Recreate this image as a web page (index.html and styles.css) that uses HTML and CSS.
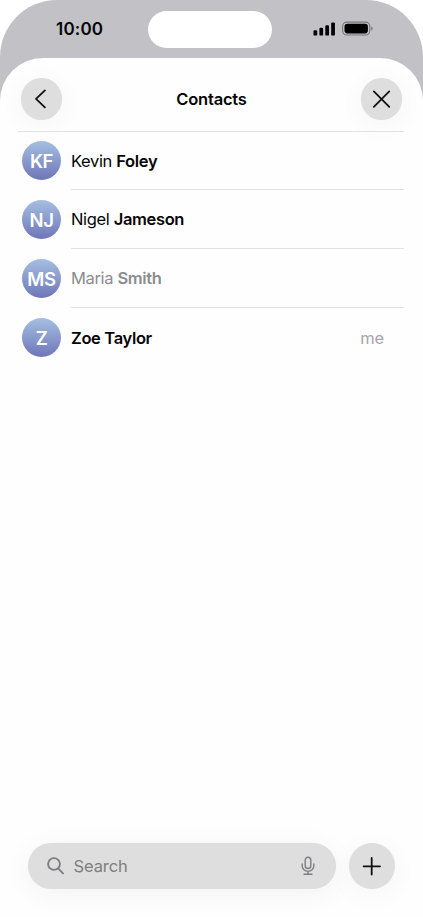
FILE: index.html
```html
<!DOCTYPE html>
<html lang="en">
<head>
<meta charset="utf-8">
<title>Contacts</title>
<link rel="stylesheet" href="styles.css">
</head>
<body>
<div class="phone">
  <div class="status">
    <span class="time">10:00</span>
    <div class="island"></div>
    <svg class="signals" width="61" height="16" viewBox="0 0 61 16">
      <rect x="0.5" y="9.3" width="3.7" height="5.3" rx="1.2"/>
      <rect x="6.4" y="6.8" width="3.7" height="7.8" rx="1.2"/>
      <rect x="12.3" y="4.2" width="3.7" height="10.4" rx="1.2"/>
      <rect x="18.2" y="1.4" width="3.7" height="13.2" rx="1.2"/>
      <rect class="shell" x="29.6" y="1.1" width="27.2" height="12.9" rx="4.2"/>
      <rect x="31.5" y="2.7" width="23.4" height="9.7" rx="2.8"/>
      <path class="tip" d="M58.2 5.4v4.4q1.5-.6 1.5-2.2t-1.5-2.2z"/>
    </svg>
  </div>
  <main class="sheet">
    <header class="header">
      <button class="round" aria-label="Back"><svg width="41.5" height="41.5" viewBox="0 0 42 42"><path d="M24.2 12.6 15.2 21.2l9 8.6"/></svg></button>
      <h1 class="title">Contacts</h1>
      <button class="round" aria-label="Close"><svg width="41.5" height="41.5" viewBox="0 0 42 42"><path d="m13 13.6 15.6 15.6M28.6 13.6 13 29.2"/></svg></button>
    </header>
    <ul class="list">
      <li class="row"><span class="avatar">KF</span><div class="cell"><span class="name kevin">Kevin <b>Foley</b></span></div></li>
      <li class="row"><span class="avatar">NJ</span><div class="cell"><span class="name nigel">Nigel <b>Jameson</b></span></div></li>
      <li class="row"><span class="avatar">MS</span><div class="cell"><span class="name maria">Maria <b>Smith</b></span></div></li>
      <li class="row"><span class="avatar">Z</span><div class="cell"><span class="name zoe"><b>Zoe Taylor</b></span><span class="me">me</span></div></li>
    </ul>
    <footer class="toolbar">
      <div class="search">
        <svg class="lens" width="18" height="18" viewBox="0 0 18 18"><circle cx="7" cy="7" r="5.9"/><path d="m11.4 11.6 4.6 4.7"/></svg>
        <span class="hint">Search</span>
        <svg class="mic" width="14" height="20" viewBox="0 0 14 20"><rect x="4.2" y="1.2" width="5.6" height="11.3" rx="2.8"/><path d="M1.2 8v1.9a5.8 5.5 0 0 0 11.6 0V8M7 15.4v2.8M3 18.3h8"/></svg>
      </div>
      <button class="round add" aria-label="Add"><svg width="46" height="46" viewBox="0 0 46 46"><path d="M22.7 15v16.6M14.6 23.3h16.4"/></svg></button>
    </footer>
  </main>
</div>
</body>
</html>
```
FILE: styles.css
```css
* { box-sizing: border-box; }
body {
  margin: 0;
  background: #fff;
  font-family: Inter, sans-serif;
  color: #050505;
}
.phone {
  display: flex;
  flex-direction: column;
  width: 423px;
  height: 917px;
  overflow: hidden;
  border-radius: 57px 57px 0 0;
  background: #c2c1c6;
}
.status {
  display: grid;
  grid-template-columns: 148px 123.5px 1fr;
  height: 58px;
  padding-top: 10.5px;
}
.time {
  padding: 7.5px 0 0 56px;
  font-size: 17px;
  line-height: 22px;
  font-weight: 600;
  letter-spacing: .2px;
}
.island { height: 37px; border-radius: 19px; background: #fff; }
.signals { margin: 10px 0 0 41.5px; }
.signals .shell { fill: none; stroke: #77767a; stroke-width: 1.1; }
.signals .tip { fill: #77767a; }
.sheet {
  display: flex;
  flex: 1;
  flex-direction: column;
  border-radius: 43px 43px 0 0;
  background: #fefefe;
}
.header {
  display: flex;
  align-items: center;
  justify-content: space-between;
  height: 74px;
  flex: none;
  margin: 0 19px 0 18px;
  padding: 9px 1.5px 0 2.5px;
  border-bottom: 1px solid #e3e3e4;
}
.round {
  width: 41.5px;
  height: 41.5px;
  padding: 0;
  border: 0;
  border-radius: 50%;
  background: #dedede;
  box-shadow: 0 0 1px #eee, 0 5px 28px rgba(0, 0, 0, .045);
}
.round svg { display: block; }
.round path {
  fill: none;
  stroke: #111;
  stroke-width: 1.8;
  stroke-linecap: round;
  stroke-linejoin: round;
}
.title {
  margin: 0;
  font-size: 16.5px;
  font-weight: 600;
  letter-spacing: -.2px;
}
.list { margin: 0; padding: 0 19px 0 22px; list-style: none; }
.row { display: flex; align-items: center; height: 59px; }
.row:first-child { height: 58px; }
.row:first-child .avatar { margin-top: -1px; }
.avatar {
  display: grid;
  place-items: center;
  width: 39px;
  height: 39px;
  margin-right: 10px;
  border-radius: 50%;
  background: linear-gradient(#a5bfe1, #6e76b8);
  color: #fff;
  font-size: 18.5px;
  font-weight: 600;
  letter-spacing: -.4px;
}
.cell {
  display: flex;
  align-items: center;
  justify-content: space-between;
  flex: 1;
  height: 100%;
  padding-right: 20px;
  border-bottom: 1px solid #e3e3e4;
}
.row:last-child .cell { border-bottom: 0; }
.name { font-size: 16.5px; letter-spacing: -.35px; }
.name b { font-weight: 600; }
.maria { color: #8c8c90; }
.me { color: #a5a5a8; font-size: 16.5px; letter-spacing: -.2px; }
.toolbar {
  display: flex;
  justify-content: space-between;
  margin: auto 28px 28px;
}
.search {
  display: flex;
  align-items: center;
  width: 308px;
  height: 46px;
  padding: 0 21.5px 0 19px;
  border-radius: 23px;
  background: #dedede;
  box-shadow: 0 0 1px #eee, 0 5px 28px rgba(0, 0, 0, .05);
}
.search svg { fill: none; stroke: #7d7e80; stroke-linecap: round; }
.lens { stroke-width: 1.9; }
.mic { margin-left: auto; stroke-width: 1.4; }
.hint { margin-left: 8.5px; color: #7d7e80; font-size: 16.5px; letter-spacing: -.1px; }
.add { width: 46px; height: 46px; }
```
